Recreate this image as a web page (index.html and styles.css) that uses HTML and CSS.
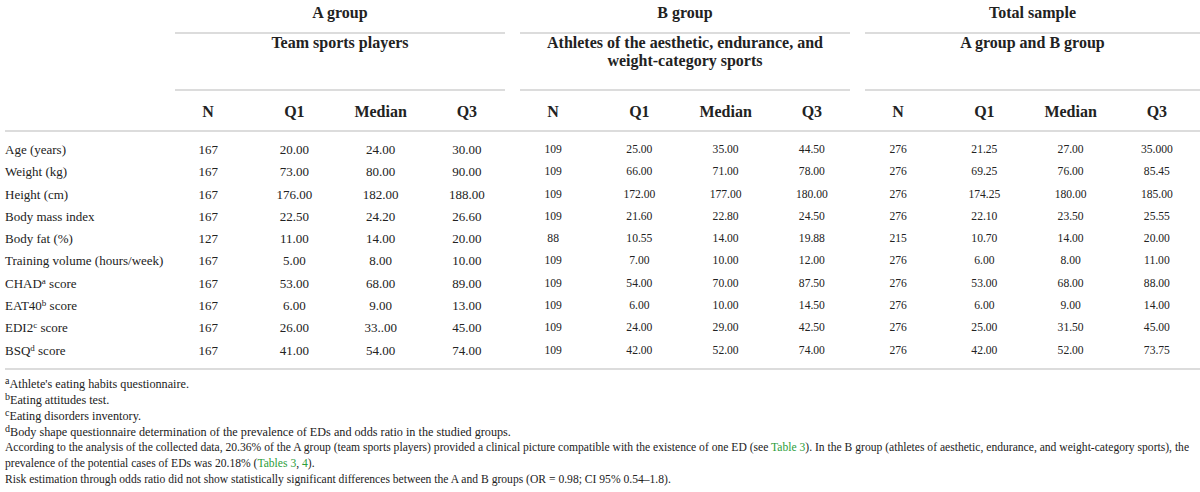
FILE: index.html
```html
<!DOCTYPE html>
<html lang="en">
<head>
  <meta charset="UTF-8" />
  <title>Table 2</title>
  <link rel="stylesheet" href="styles.css">
</head>
<body>
  <table class="stats">
    <colgroup>
      <col class="c-label">
      <col span="12" class="c-num">
    </colgroup>
    <thead>
      <tr>
        <th rowspan="4" class="blank"></th>
        <th colspan="4" class="grp"><div class="grp-label">A group</div></th>
        <th colspan="4" class="grp"><div class="grp-label">B group</div></th>
        <th colspan="4" class="grp grp-last"><div class="grp-label">Total sample</div></th>
      </tr>
      <tr class="subrow">
        <th colspan="4" class="grp">Team sports players</th>
        <th colspan="4" class="grp">Athletes of the aesthetic, endurance, and<br>weight-category sports</th>
        <th colspan="4" class="grp grp-last">A group and B group</th>
      </tr>
      <tr class="rule">
        <th colspan="4" class="grp"><div class="rule-line"></div></th>
        <th colspan="4" class="grp"><div class="rule-line"></div></th>
        <th colspan="4" class="grp grp-last"><div class="rule-line"></div></th>
      </tr>
      <tr class="cols">
        <th>N</th><th>Q1</th><th>Median</th><th>Q3</th>
        <th>N</th><th>Q1</th><th>Median</th><th>Q3</th>
        <th>N</th><th>Q1</th><th>Median</th><th>Q3</th>
      </tr>
    </thead>
    <tbody>
      <tr>
        <td>Age (years)</td>
        <td>167</td><td>20.00</td><td>24.00</td><td>30.00</td>
        <td class="cn">109</td><td class="cn">25.00</td><td class="cn">35.00</td><td class="cn">44.50</td>
        <td class="cn">276</td><td class="cn">21.25</td><td class="cn">27.00</td><td class="cn">35.000</td>
      </tr>
      <tr>
        <td>Weight (kg)</td>
        <td>167</td><td>73.00</td><td>80.00</td><td>90.00</td>
        <td class="cn">109</td><td class="cn">66.00</td><td class="cn">71.00</td><td class="cn">78.00</td>
        <td class="cn">276</td><td class="cn">69.25</td><td class="cn">76.00</td><td class="cn">85.45</td>
      </tr>
      <tr>
        <td>Height (cm)</td>
        <td>167</td><td>176.00</td><td>182.00</td><td>188.00</td>
        <td class="cn">109</td><td class="cn">172.00</td><td class="cn">177.00</td><td class="cn">180.00</td>
        <td class="cn">276</td><td class="cn">174.25</td><td class="cn">180.00</td><td class="cn">185.00</td>
      </tr>
      <tr>
        <td>Body mass index</td>
        <td>167</td><td>22.50</td><td>24.20</td><td>26.60</td>
        <td class="cn">109</td><td class="cn">21.60</td><td class="cn">22.80</td><td class="cn">24.50</td>
        <td class="cn">276</td><td class="cn">22.10</td><td class="cn">23.50</td><td class="cn">25.55</td>
      </tr>
      <tr>
        <td>Body fat (%)</td>
        <td>127</td><td>11.00</td><td>14.00</td><td>20.00</td>
        <td class="cn">88</td><td class="cn">10.55</td><td class="cn">14.00</td><td class="cn">19.88</td>
        <td class="cn">215</td><td class="cn">10.70</td><td class="cn">14.00</td><td class="cn">20.00</td>
      </tr>
      <tr>
        <td>Training volume (hours/week)</td>
        <td>167</td><td>5.00</td><td>8.00</td><td>10.00</td>
        <td class="cn">109</td><td class="cn">7.00</td><td class="cn">10.00</td><td class="cn">12.00</td>
        <td class="cn">276</td><td class="cn">6.00</td><td class="cn">8.00</td><td class="cn">11.00</td>
      </tr>
      <tr>
        <td>CHAD<sup>a</sup> score</td>
        <td>167</td><td>53.00</td><td>68.00</td><td>89.00</td>
        <td class="cn">109</td><td class="cn">54.00</td><td class="cn">70.00</td><td class="cn">87.50</td>
        <td class="cn">276</td><td class="cn">53.00</td><td class="cn">68.00</td><td class="cn">88.00</td>
      </tr>
      <tr>
        <td>EAT40<sup>b</sup> score</td>
        <td>167</td><td>6.00</td><td>9.00</td><td>13.00</td>
        <td class="cn">109</td><td class="cn">6.00</td><td class="cn">10.00</td><td class="cn">14.50</td>
        <td class="cn">276</td><td class="cn">6.00</td><td class="cn">9.00</td><td class="cn">14.00</td>
      </tr>
      <tr>
        <td>EDI2<sup>c</sup> score</td>
        <td>167</td><td>26.00</td><td>33..00</td><td>45.00</td>
        <td class="cn">109</td><td class="cn">24.00</td><td class="cn">29.00</td><td class="cn">42.50</td>
        <td class="cn">276</td><td class="cn">25.00</td><td class="cn">31.50</td><td class="cn">45.00</td>
      </tr>
      <tr>
        <td>BSQ<sup>d</sup> score</td>
        <td>167</td><td>41.00</td><td>54.00</td><td>74.00</td>
        <td class="cn">109</td><td class="cn">42.00</td><td class="cn">52.00</td><td class="cn">74.00</td>
        <td class="cn">276</td><td class="cn">42.00</td><td class="cn">52.00</td><td class="cn">73.75</td>
      </tr>
    </tbody>
  </table>

  <div class="notes">
    <p><sup>a</sup>Athlete's eating habits questionnaire.</p>
    <p><sup>b</sup>Eating attitudes test.</p>
    <p><sup>c</sup>Eating disorders inventory.</p>
    <p><sup>d</sup>Body shape questionnaire determination of the prevalence of EDs and odds ratio in the studied groups.</p>
    <p class="narrow">According to the analysis of the collected data, 20.36% of the A group (team sports players) provided a clinical picture compatible with the existence of one ED (see <a href="#">Table 3</a>). In the B group (athletes of aesthetic, endurance, and weight-category sports), the<br>prevalence of the potential cases of EDs was 20.18% (<a href="#">Tables 3</a>, <a href="#">4</a>).</p>
    <p class="narrow">Risk estimation through odds ratio did not show statistically significant differences between the A and B groups (OR = 0.98; CI 95% 0.54–1.8).</p>
  </div>
</body>
</html>
```

FILE: styles.css
```css
body {
  margin: 0;
  padding: 0 0 0 5px;
  background: #fff;
  color: #222;
  font-family: "Liberation Serif", "Times New Roman", serif;
}
.stats {
  width: 1195px;
  border-collapse: collapse;
  table-layout: fixed;
  font-family: "Liberation Serif", "Times New Roman", serif;
}
.c-label {
  width: 160px;
}
.stats th {
  font-family: "Liberation Serif", "Times New Roman", serif;
  font-weight: bold;
  font-size: 16px;
  line-height: 18px;
  padding: 0;
  text-align: center;
  vertical-align: top;
}
.stats th.grp {
  padding: 0 5px 0 10px;
}
.stats th.grp-last {
  padding-right: 0;
}
.grp-label {
  padding: 4px 0 10px;
  border-bottom: 2px solid #dcdcdc;
}
.subrow th.grp {
  padding-bottom: 19px;
}
.rule th.grp {
  line-height: 0;
  font-size: 0;
}
.rule-line {
  border-top: 2px solid #dcdcdc;
}
.cols th {
  padding: 12px 0 9px;
}
.stats th.blank,
.cols th {
  border-bottom: 2px solid #dcdcdc;
}
.stats td {
  font-size: 13px;
  line-height: 18px;
  padding: 2.15px 0;
  text-align: center;
  white-space: nowrap;
}
.stats td:first-child {
  text-align: left;
}
.stats td.cn {
  font-size: 11.6px;
}
.stats tbody tr:first-child td {
  padding-top: 9px;
}
.stats tbody tr:last-child td {
  padding-bottom: 8px;
  border-bottom: 2px solid #dcdcdc;
}
sup {
  font-size: 9px;
  line-height: 0;
  vertical-align: 4px;
}
.notes {
  padding-top: 6px;
}
.notes p {
  margin: 0;
  font-size: 12.2px;
  line-height: 16px;
}
.notes p sup {
  font-size: 10px;
}
.notes p.narrow {
  font-size: 11.6px;
  white-space: nowrap;
}
.notes a {
  color: #2c9e3a;
  text-decoration: none;
}
```
